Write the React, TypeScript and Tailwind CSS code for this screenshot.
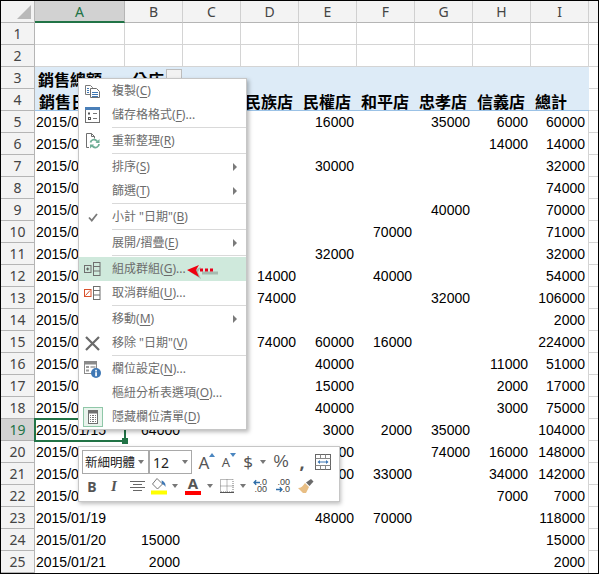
import type { ReactNode } from "react";

// Sheet data: only what shows around the context menu
const columns = ["A", "B", "C", "D", "E", "F", "G", "H", "I"];

const dataRows: { row: number; date: string; cells: Record<string, string> }[] = [
  { row: 5, date: "2015/01/01", cells: { E: "16000", G: "35000", H: "6000", I: "60000" } },
  { row: 6, date: "2015/01/02", cells: { H: "14000", I: "14000" } },
  { row: 7, date: "2015/01/03", cells: { E: "30000", I: "32000" } },
  { row: 8, date: "2015/01/04", cells: { I: "74000" } },
  { row: 9, date: "2015/01/05", cells: { G: "40000", I: "70000" } },
  { row: 10, date: "2015/01/06", cells: { F: "70000", I: "71000" } },
  { row: 11, date: "2015/01/07", cells: { E: "32000", I: "32000" } },
  { row: 12, date: "2015/01/08", cells: { D: "14000", F: "40000", I: "54000" } },
  { row: 13, date: "2015/01/09", cells: { D: "74000", G: "32000", I: "106000" } },
  { row: 14, date: "2015/01/10", cells: { I: "2000" } },
  { row: 15, date: "2015/01/11", cells: { D: "74000", E: "60000", F: "16000", I: "224000" } },
  { row: 16, date: "2015/01/12", cells: { E: "40000", H: "11000", I: "51000" } },
  { row: 17, date: "2015/01/13", cells: { E: "15000", H: "2000", I: "17000" } },
  { row: 18, date: "2015/01/14", cells: { E: "40000", H: "3000", I: "75000" } },
  { row: 19, date: "2015/01/15", cells: { B: "64000", E: "3000", F: "2000", G: "35000", I: "104000" } },
  { row: 20, date: "2015/01/16", cells: { E: "58000", G: "74000", H: "16000", I: "148000" } },
  { row: 21, date: "2015/01/17", cells: { E: "75000", F: "33000", H: "34000", I: "142000" } },
  { row: 22, date: "2015/01/18", cells: { H: "7000", I: "7000" } },
  { row: 23, date: "2015/01/19", cells: { E: "48000", F: "70000", I: "118000" } },
  { row: 24, date: "2015/01/20", cells: { B: "15000", I: "15000" } },
  { row: 25, date: "2015/01/21", cells: { B: "2000", I: "2000" } },
];

const headerLabels: Record<string, string> = {
  A: "銷售日期",
  D: "民族店",
  E: "民權店",
  F: "和平店",
  G: "忠孝店",
  H: "信義店",
  I: "總計",
};

function RowHead({ n, active }: { n: number; active?: boolean }) {
  return (
    <div
      className={`flex h-[22px] items-center justify-center border-b border-r font-['Noto_Sans',sans-serif] text-[14px] ${
        active
          ? "border-b-[#b0b0b0] border-r-[#217346] bg-[#d2d2d2] text-[#217346]"
          : "border-b-[#b5b5b5] border-r-[#b5b5b5] bg-[#f3f3f3] text-[#444]"
      }`}
    >
      {n}
    </div>
  );
}

function SpareCell({ last }: { last?: boolean }) {
  return <div className={`h-[22px] border-b border-[#d4d4d4] ${last ? "border-b-0" : ""}`} />;
}

function Sheet() {
  return (
    <div className="grid grid-cols-[34px_90px_repeat(8,58px)_9px] font-['Liberation_Sans',sans-serif] text-[14px] text-black">
      {/* Column letters */}
      <div className="flex h-[22px] items-end justify-end border-b border-r border-[#b5b5b5] bg-[#f3f3f3] pb-[3px] pr-[3px]">
        <svg width="14" height="14" viewBox="0 0 14 14">
          <polygon points="14,0 14,14 0,14" fill="#b9b9b9" />
        </svg>
      </div>
      {columns.map((c) => (
        <div
          key={c}
          className={`flex h-[22px] items-center justify-center border-r font-['Noto_Sans',sans-serif] text-[14px] ${
            c === "A"
              ? "border-b-2 border-b-[#217346] border-r-[#b5b5b5] bg-[#d2d2d2] text-[#217346]"
              : "border-b border-b-[#b5b5b5] border-r-[#d0d0d0] bg-[#f3f3f3] text-[#444]"
          }`}
        >
          {c}
        </div>
      ))}
      <div className="h-[22px] border-b border-[#b5b5b5] bg-[#f3f3f3]" />

      {/* Empty rows above the pivot */}
      {[1, 2].map((n) => (
        <div key={n} className="contents">
          <RowHead n={n} />
          {columns.map((c) => (
            <div key={c} className="h-[22px] border-b border-r border-[#d4d4d4]" />
          ))}
          <SpareCell />
        </div>
      ))}

      {/* Pivot title row */}
      <RowHead n={3} />
      <div className="col-span-2 flex h-[22px] items-center bg-[#ddebf7] pl-[3px] pt-[1px] font-['Noto_Sans_CJK_TC',sans-serif] text-[16px] font-bold text-black">
        <span className="w-[94px] shrink-0">銷售總額</span>
        <span className="shrink-0">分店</span>
        <span className="ml-[2px] mt-[-1px] h-[18px] w-[16px] shrink-0 border border-[#bdbdbd] bg-[#f2f2f2]" />
      </div>
      <div className="col-span-7 h-[22px] bg-[#ddebf7]" />
      <SpareCell />

      {/* Pivot header row */}
      <RowHead n={4} />
      {columns.map((c) => (
        <div
          key={c}
          className="flex h-[22px] items-center whitespace-nowrap border-b border-[#9bc2e6] bg-[#ddebf7] pl-[4px] pt-[2px] font-['Noto_Sans_CJK_TC',sans-serif] text-[16px] font-bold text-black"
        >
          {headerLabels[c] ?? ""}
        </div>
      ))}
      <SpareCell />

      {/* Data */}
      {dataRows.map((r) => (
        <div key={r.row} className="contents">
          <RowHead n={r.row} active={r.row === 19} />
          <div className="relative flex h-[22px] items-center pl-[1px]">
            {r.date}
            {r.row === 19 && (
              <span className="absolute -left-[1px] -top-[1px] h-[24px] w-[92px] border-2 border-[#217346]">
                <span className="absolute -bottom-[4px] -right-[4px] h-[6px] w-[6px] bg-[#217346]" />
              </span>
            )}
          </div>
          {columns.slice(1).map((c) => (
            <div
              key={c}
              className={`flex h-[22px] items-center justify-end pr-[3px] ${
                c === "I" ? "border-r border-[#d4d4d4] pr-[2px]" : ""
              }`}
            >
              {r.cells[c] ?? ""}
            </div>
          ))}
          <SpareCell last={r.row === 25} />
        </div>
      ))}
    </div>
  );
}

/* ---------- Context menu icons ---------- */

function CopyIcon() {
  return (
    <svg width="15" height="13" viewBox="0 0 15 13" fill="none">
      <path d="M5 9.500H.5V.5h5l2 2v1" stroke="#7a7a7a" />
      <path d="M5.500 3.500h6l3 3v6h-9z" fill="#fff" stroke="#6f6f6f" />
      <path d="M7 7.500h6M7 9.500h6M7 11.500h6" stroke="#3f78b5" />
      <path d="M2 3.500h2M2 5.500h2M2 7.500h2" stroke="#3f78b5" />
    </svg>
  );
}

function FormatIcon() {
  return (
    <svg width="15" height="16" viewBox="0 0 15 16" fill="none">
      <rect x=".5" y="1.500" width="14" height="14" fill="#fff" stroke="#6f6f6f" />
      <rect x="0" y="0" width="15" height="3" fill="#4a7fb8" />
      <rect x="3" y="5.500" width="2" height="2" fill="#555" />
      <rect x="3.500" y="10.500" width="2" height="2" stroke="#555" />
      <path d="M8 6.500h4M8 11.500h4" stroke="#777" />
    </svg>
  );
}

function RefreshIcon() {
  return (
    <svg width="14" height="16" viewBox="0 0 14 16" fill="none">
      <path d="M3 14.500H.5V.5h5l3 3v2M5.500.5v3h3" stroke="#6f6f6f" />
      <path d="M4.500 9.500a3.500 3.500 0 0 1 6-1.800l1 1M13 11a3.500 3.500 0 0 1-6 2.500l-1-1" stroke="#6fae96" strokeWidth="1.800" />
      <path d="M13.500 6v4h-4z" fill="#6fae96" />
      <path d="M4 15.500v-4h4z" fill="#6fae96" />
    </svg>
  );
}

function CheckIcon() {
  return (
    <svg width="10" height="9" viewBox="0 0 10 9" fill="none">
      <path d="M1 4.500l2.800 3L9 1" stroke="#7a7a7a" strokeWidth="1.800" />
    </svg>
  );
}

function GroupIcon({ cancel }: { cancel?: boolean }) {
  return (
    <svg width="17" height="14" viewBox="0 0 17 14" fill="none">
      <rect x="9.500" y=".5" width="6.500" height="13" stroke="#6f6f6f" />
      <path d="M9.500 4.500H16M9.500 9H16" stroke="#6f6f6f" />
      {cancel ? (
        <>
          <rect x=".5" y="3.500" width="6.500" height="7" fill="#fff" stroke="#d9512c" />
          <path d="M1.500 9.500l4.500-5" stroke="#d9512c" />
        </>
      ) : (
        <>
          <rect x=".5" y="3.500" width="6.500" height="7" stroke="#6f6f6f" />
          <path d="M2.200 7h3M3.700 5.500v3" stroke="#555" />
        </>
      )}
    </svg>
  );
}

function RemoveIcon() {
  return (
    <svg width="15" height="15" viewBox="0 0 15 15" fill="none">
      <path d="M1 1l13 13M14 1L1 14" stroke="#6a6a6a" strokeWidth="2.200" />
    </svg>
  );
}

function FieldIcon() {
  return (
    <svg width="17" height="17" viewBox="0 0 17 17" fill="none">
      <rect x=".5" y=".5" width="12" height="12" fill="#fff" stroke="#8a8a8a" />
      <rect x=".5" y=".5" width="12" height="3" fill="#8a8a8a" />
      <rect x="2" y="5" width="3" height="2" fill="#9a9a9a" />
      <rect x="2" y="8.500" width="3" height="2" fill="#9a9a9a" />
      <rect x="6.500" y="5" width="5" height="2" fill="#b5b5b5" />
      <circle cx="12" cy="12" r="5" fill="#3f78b5" />
      <rect x="11.200" y="8.800" width="1.700" height="1.700" fill="#fff" />
      <rect x="11.200" y="11.200" width="1.700" height="4" fill="#fff" />
    </svg>
  );
}

function CalcIcon() {
  return (
    <svg width="10" height="14" viewBox="0 0 10 14" fill="none">
      <rect x=".5" y=".5" width="9" height="13" fill="#fff" stroke="#6f6f6f" />
      <rect x="1" y="1" width="8" height="2.500" fill="#6f6f6f" />
      <path d="M2 5.500h6M2 7.500h6M2 9.500h6M2 11.500h6" stroke="#777" />
      <path d="M3.500 5v7M6.500 5v7" stroke="#fff" />
    </svg>
  );
}

type MenuEntry = {
  label: string;
  hotkey: string;
  tail?: string;
  icon?: ReactNode;
  submenu?: boolean;
  sepAfter?: boolean;
  hot?: boolean;
  toggled?: boolean;
};

const menuItems: MenuEntry[] = [
  { label: "複製", hotkey: "C", icon: <CopyIcon /> },
  { label: "儲存格格式", hotkey: "F", tail: "...", icon: <FormatIcon />, sepAfter: true },
  { label: "重新整理", hotkey: "R", icon: <RefreshIcon />, sepAfter: true },
  { label: "排序", hotkey: "S", submenu: true },
  { label: "篩選", hotkey: "T", submenu: true, sepAfter: true },
  { label: '小計 "日期"', hotkey: "B", icon: <CheckIcon />, sepAfter: true },
  { label: "展開/摺疊", hotkey: "E", submenu: true, sepAfter: true },
  { label: "組成群組", hotkey: "G", tail: "...", icon: <GroupIcon />, hot: true },
  { label: "取消群組", hotkey: "U", tail: "...", icon: <GroupIcon cancel />, sepAfter: true },
  { label: "移動", hotkey: "M", submenu: true },
  { label: '移除 "日期"', hotkey: "V", icon: <RemoveIcon />, sepAfter: true },
  { label: "欄位設定", hotkey: "N", tail: "...", icon: <FieldIcon /> },
  { label: "樞紐分析表選項", hotkey: "O", tail: "..." },
  { label: "隱藏欄位清單", hotkey: "D", icon: <CalcIcon />, toggled: true },
];

function MenuRow({ item }: { item: MenuEntry }) {
  return (
    <>
      <div className={`relative flex h-[24px] items-center ${item.hot ? "bg-[#cfe9dc]" : ""}`}>
        <div className="flex w-[33px] shrink-0 items-center justify-center pr-[6px]">
          {item.toggled ? (
            <span className="flex h-[20px] w-[20px] shrink-0 items-center justify-center border border-[#8fc7a8] bg-[#e8f3ec]">
              {item.icon}
            </span>
          ) : (
            item.icon
          )}
        </div>
        <span className="whitespace-nowrap">
          {item.label}(<span className="underline underline-offset-2">{item.hotkey}</span>){item.tail ?? ""}
        </span>
        {item.submenu && (
          <span className="ml-auto mr-[9px] h-0 w-0 border-y-[4.500px] border-l-[4px] border-y-transparent border-l-[#7a7a7a]" />
        )}
      </div>
      {item.sepAfter && (
        <div className="h-[2px] pl-[33px]">
          <div className="h-[1px] bg-[#d9d9d9]" />
        </div>
      )}
    </>
  );
}

function ContextMenu() {
  return (
    <div className="absolute left-[77px] top-[77px] w-[169px] border border-[#c6c6c6] bg-white font-['Noto_Sans','Noto_Sans_CJK_TC',sans-serif] text-[12px] text-[#6c6c6c] shadow-[2px_2px_4px_rgba(0,0,0,0.28)]">
      {menuItems.map((item) => (
        <MenuRow key={item.label} item={item} />
      ))}
    </div>
  );
}

function RedArrow() {
  return (
    <svg className="absolute left-[185px] top-[263px]" width="36" height="20" viewBox="0 0 36 20">
      <path d="M4 8l11-5-3 5 3 7z" fill="#000" opacity=".2" />
      <path d="M16 9h16" stroke="#000" strokeOpacity=".2" strokeWidth="3" />
      <path d="M1 6l12-5-3 5 3 7z" fill="#f0000f" />
      <rect x="14" y="4.500" width="3" height="3" fill="#e8001a" />
      <rect x="19" y="4.500" width="3" height="3" fill="#e8001a" />
      <rect x="24" y="4.500" width="3" height="3" fill="#e8001a" />
    </svg>
  );
}

/* ---------- Mini toolbar ---------- */

function Caret() {
  return <span className="h-0 w-0 shrink-0 border-x-[3.500px] border-t-[4px] border-x-transparent border-t-[#777]" />;
}

function Tool({ w, children }: { w: number; children: ReactNode }) {
  return (
    <span className="flex shrink-0 items-center justify-center" style={{ width: w }}>
      {children}
    </span>
  );
}

function GrowFont({ down }: { down?: boolean }) {
  return (
    <span className={`relative font-['Noto_Sans',sans-serif] leading-none text-[#555] ${down ? "text-[13px]" : "text-[17px]"}`}>
      A
      <span
        className={`absolute -right-[6px] h-0 w-0 border-x-[3.500px] border-x-transparent ${
          down ? "-top-[3px] border-t-[4px] border-t-[#4a86c0]" : "-top-[1px] border-b-[4px] border-b-[#4a86c0]"
        }`}
      />
    </span>
  );
}

function WrapIcon() {
  return (
    <svg width="16" height="16" viewBox="0 0 16 16" fill="none">
      <rect x=".5" y=".5" width="15" height="15" stroke="#666" />
      <path d="M.5 4.500h15M.5 11.500h15M5.500.5v4M10.500.5v4M5.500 11.500v4M10.500 11.500v4" stroke="#888" />
      <path d="M3.500 8h9" stroke="#3f78b5" />
      <path d="M2.500 8l2.500-2v4zM13.500 8L11 6v4z" fill="#3f78b5" />
    </svg>
  );
}

function BucketIcon() {
  return (
    <svg width="16" height="18" viewBox="0 0 16 18" fill="none">
      <path d="M6 1.500l5.500 5.500-5 5-5-5z" fill="#fff" stroke="#777" />
      <path d="M10.500 3.500c2.500.6 4.500 3 4 6.500-1-1.800-2-2.500-3.500-3z" fill="#3f78b5" />
      <rect x="0" y="13.500" width="16" height="4" fill="#ffff00" />
    </svg>
  );
}

function ColorA() {
  return (
    <span className="flex w-[16px] flex-col items-center">
      <span className="text-[15px] font-bold leading-[13px] text-[#555]">A</span>
      <span className="mt-[1px] h-[4px] w-[16px] bg-[#ff0000]" />
    </span>
  );
}

function BorderIcon() {
  return (
    <svg width="14" height="14" viewBox="0 0 14 14" fill="none">
      <rect x=".5" y=".5" width="12.500" height="12.500" stroke="#777" strokeDasharray="1 1" />
      <path d="M7 .5v13M.5 7h13" stroke="#777" strokeDasharray="1 1" />
      <path d="M0 13.500h14" stroke="#555" />
    </svg>
  );
}

function DecimalIcon({ more }: { more?: boolean }) {
  return (
    <span className="relative block h-[14px] w-[14px] font-['Liberation_Sans',sans-serif] text-[9px] leading-[7px] text-[#444]">
      <span className="absolute right-0 top-0">{more ? ".00" : ".0"}</span>
      <span className="absolute right-0 top-[7px]">{more ? ".0" : ".00"}</span>
      <svg className={`absolute left-0 ${more ? "top-[7px]" : "top-0"}`} width="7" height="7" viewBox="0 0 7 7" fill="none">
        {more ? (
          <path d="M0 3.500h6M3.800 1.200L6 3.500 3.800 5.800" stroke="#2f6ea8" strokeWidth="1.300" />
        ) : (
          <path d="M7 3.500H1M3.200 1.200L1 3.500l2.200 2.300" stroke="#2f6ea8" strokeWidth="1.300" />
        )}
      </svg>
    </span>
  );
}

function BrushIcon() {
  return (
    <svg width="17" height="15" viewBox="0 0 17 15" fill="none">
      <path d="M8 4l4 4-3 6H6L1 9c3 0 5-2 7-5z" fill="#e8be84" />
      <path d="M9 3.500l3.500 3.500 4-4.500L14 0z" fill="#6b6b6b" />
    </svg>
  );
}

function MiniToolbar() {
  return (
    <div className="absolute left-[77px] top-[445px] flex h-[56px] w-[262px] flex-col border border-[#c6c6c6] bg-white font-['Noto_Sans',sans-serif] text-[#555] shadow-[1px_2px_4px_rgba(0,0,0,0.25)]">
      <div className="ml-[3px] mt-[3px] flex h-[24px] items-center">
        <div className="flex h-[24px] w-[67px] items-center justify-between border border-[#a9a9a9] pl-[2px] pr-[4px] font-['Noto_Sans_CJK_TC',sans-serif] text-[12.500px] text-[#222]">
          新細明體
          <Caret />
        </div>
        <div className="flex h-[24px] w-[43px] items-center justify-between border border-[#a9a9a9] pl-[3px] pr-[3px] text-[14px] text-[#222]">
          12
          <Caret />
        </div>
        <Tool w={24}>
          <GrowFont />
        </Tool>
        <Tool w={20}>
          <GrowFont down />
        </Tool>
        <Tool w={24}>
          <span className="text-[17px]">$</span>
        </Tool>
        <Tool w={6}>
          <Caret />
        </Tool>
        <Tool w={30}>
          <span className="font-['Liberation_Sans',sans-serif] text-[17px]">%</span>
        </Tool>
        <Tool w={12}>
          <span className="text-[18px] font-bold leading-none">,</span>
        </Tool>
        <Tool w={30}>
          <WrapIcon />
        </Tool>
      </div>
      <div className="ml-[3px] flex h-[24px] items-center">
        <Tool w={20}>
          <span className="text-[14px] font-bold">B</span>
        </Tool>
        <Tool w={24}>
          <span className="font-['Liberation_Serif',serif] text-[15px] font-bold italic">I</span>
        </Tool>
        <Tool w={22}>
          <svg width="15" height="11" viewBox="0 0 15 11" fill="none">
            <path d="M0 .5h15M3 3.500h9M0 6.500h15M3 9.500h9" stroke="#666" />
          </svg>
        </Tool>
        <Tool w={22}>
          <BucketIcon />
        </Tool>
        <Tool w={10}>
          <Caret />
        </Tool>
        <Tool w={26}>
          <ColorA />
        </Tool>
        <Tool w={8}>
          <Caret />
        </Tool>
        <Tool w={26}>
          <BorderIcon />
        </Tool>
        <Tool w={6}>
          <Caret />
        </Tool>
        <Tool w={28}>
          <DecimalIcon />
        </Tool>
        <Tool w={18}>
          <DecimalIcon more />
        </Tool>
        <Tool w={26}>
          <BrushIcon />
        </Tool>
      </div>
    </div>
  );
}

export default function App() {
  return (
    <div className="relative h-[574px] w-[599px] overflow-hidden border border-black bg-white">
      <Sheet />
      <ContextMenu />
      <RedArrow />
      <MiniToolbar />
    </div>
  );
}
